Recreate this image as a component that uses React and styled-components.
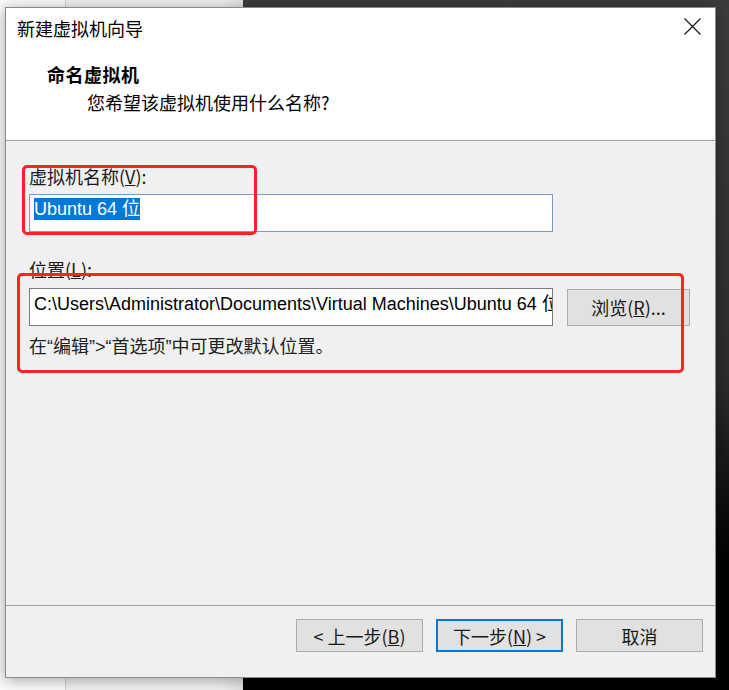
import React from 'react';
import styled, {createGlobalStyle} from 'styled-components';

const GlobalStyle = createGlobalStyle`
    html, body
    {
        margin: 0;
        padding: 0;
    }
    body
    {
        font-family: "Noto Sans CJK SC", "Liberation Sans", sans-serif;
        color: #000;
    }
`;

const CJK = `"Noto Sans CJK SC", sans-serif`;
const LATIN = `"Liberation Sans", "Noto Sans CJK SC", sans-serif`;

function CloseIcon()
{
    return (
        <svg width="17" height="17" viewBox="0 0 17 17">
            <path d="M0.5 0.5 L16.5 16.5 M16.5 0.5 L0.5 16.5" stroke="#111" strokeWidth="1.1" fill="none"/>
        </svg>
    );
}

function App()
{
    return (
        <>
            <GlobalStyle/>
            <Desktop>
                <Dialog>
                    <TitleBar>
                        <span>新建虚拟机向导</span>
                        <CloseButton><CloseIcon/></CloseButton>
                    </TitleBar>
                    <Header>
                        <h1>命名虚拟机</h1>
                        <p>您希望该虚拟机使用什么名称?</p>
                    </Header>
                    <Body>
                        <Label>虚拟机名称(<u>V</u>):</Label>
                        <Field $width={524} $top={6}>
                            <Selected>Ubuntu 64 位</Selected>
                        </Field>
                        <Label $top={25}>位置(<u>L</u>):</Label>
                        <Row>
                            <Field $width={524} $border="#7a7a7a" $line={26}>
                                C:\Users\Administrator\Documents\Virtual Machines\Ubuntu 64 位
                            </Field>
                            <Button $width={123}>浏览(<u>R</u>)...</Button>
                        </Row>
                        <Hint>在“编辑”&gt;“首选项”中可更改默认位置。</Hint>
                        <Annotation $left={16} $top={24} $width={235} $height={70}/>
                        <Annotation $left={11} $top={132} $width={667} $height={100}/>
                    </Body>
                    <Footer>
                        <Button>&lt; 上一步(<u>B</u>)</Button>
                        <Button $primary>下一步(<u>N</u>) &gt;</Button>
                        <Button>取消</Button>
                    </Footer>
                </Dialog>
            </Desktop>
        </>
    );
}

const Desktop = styled.div`
    width: 729px;
    height: 690px;
    box-sizing: border-box;
    padding: 7px 0 0 5px;
    overflow: hidden;
    background:
        linear-gradient(to right, #fbfbfb 0 65px, #cfcfcf 65px 66px, #f1f1f1 66px 220px, #e2e2e2 243px, transparent 243px),
        linear-gradient(to bottom, #3c3c3c 0%, #2c2c2c 55%, #000 82%);
`;

const Dialog = styled.div`
    width: 711px;
    height: 671px;
    box-sizing: border-box;
    border: 1px solid #8a8a8a;
    background-color: #f0f0f0;
    display: flex;
    flex-direction: column;
    box-shadow: 0 2px 14px rgba(0, 0, 0, 0.35);
`;

const TitleBar = styled.div`
    height: 42px;
    background-color: #fff;
    display: flex;
    align-items: center;
    padding: 0 14px 0 11px;
    font-family: ${CJK};
    font-size: 18px;
    span
    {
        margin-top: -2px;
    }
`;

const CloseButton = styled.div`
    margin-left: auto;
    display: flex;
    margin-top: -6px;
`;

const Header = styled.div`
    background-color: #fff;
    padding: 12px 0 26px 41px;
    border-bottom: 1px solid #a0a0a0;
    font-family: ${CJK};
    h1
    {
        margin: 0;
        font-size: 18px;
        line-height: 24px;
        font-weight: 700;
        letter-spacing: 0.5px;
    }
    p
    {
        margin: 4px 0 0 40px;
        font-size: 18px;
        line-height: 24px;
    }
`;

const Body = styled.div`
    position: relative;
    flex: 1;
    padding: 23px 0 0 23px;
    display: flex;
    flex-direction: column;
    align-items: flex-start;
`;

const Label = styled.div`
    font-family: ${CJK};
    font-size: 18px;
    line-height: 24px;
    color: #1a1a1a;
    margin-top: ${p => p.$top || 0}px;
`;

const Field = styled.div`
    width: ${p => p.$width}px;
    height: 38px;
    box-sizing: border-box;
    margin-top: ${p => p.$top || 0}px;
    border: 1px solid ${p => p.$border || '#7a9cc6'};
    background-color: #fff;
    padding: 2px 4px;
    font-family: ${LATIN};
    font-size: 18px;
    line-height: ${p => p.$line || 30}px;
    white-space: nowrap;
    overflow: hidden;
`;

const Selected = styled.span`
    display: inline-block;
    background-color: #0078d7;
    color: #fff;
    line-height: 22px;
    margin-top: 1px;
    vertical-align: top;
`;

const Row = styled.div`
    display: flex;
    align-items: center;
    gap: 14px;
    margin-top: 7px;
`;

const Hint = styled.div`
    font-family: ${LATIN};
    font-size: 18px;
    line-height: 24px;
    color: #222;
    margin-top: 9px;
`;

const Annotation = styled.div`
    position: absolute;
    left: ${p => p.$left}px;
    top: ${p => p.$top}px;
    width: ${p => p.$width}px;
    height: ${p => p.$height}px;
    box-sizing: border-box;
    border: 3px solid #ff2222;
    border-radius: 5px;
`;

const Footer = styled.div`
    height: 58px;
    border-top: 1px solid #a0a0a0;
    display: flex;
    justify-content: flex-end;
    align-items: flex-start;
    gap: 13px;
    padding: 13px 12px 0 0;
`;

const Button = styled.div`
    width: ${p => p.$width || 127}px;
    height: ${p => p.$width ? 37 : 33}px;
    box-sizing: border-box;
    border: ${p => p.$primary ? '2px solid #0078d7' : '1px solid #adadad'};
    background-color: #e1e1e1;
    display: flex;
    align-items: center;
    justify-content: center;
    font-family: ${CJK};
    font-size: 18px;
    color: #1a1a1a;
    white-space: pre;
`;

export default App;
